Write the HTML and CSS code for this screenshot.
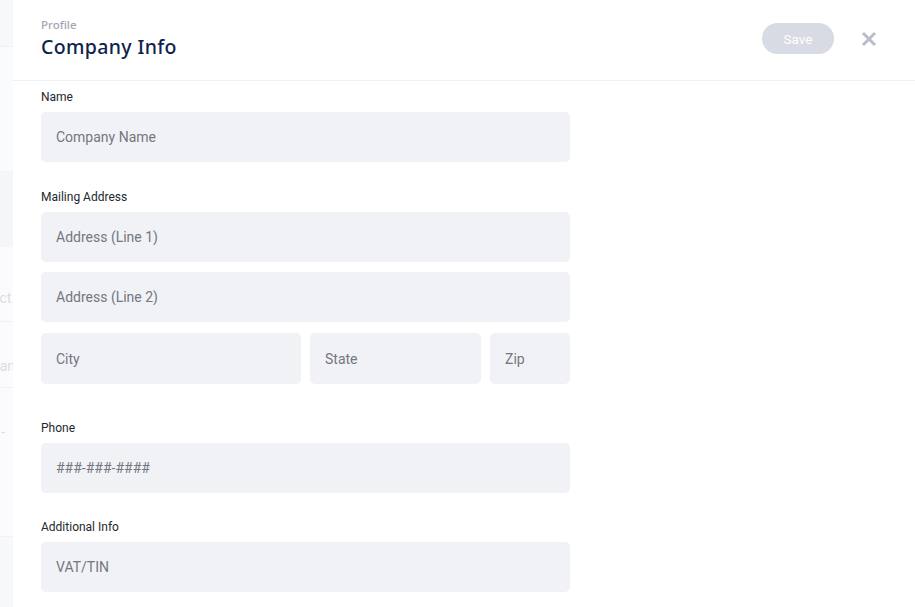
FILE: index.html
```html
<!DOCTYPE html>
<html lang="en">
<head>
<meta charset="utf-8">
<title>Company Info</title>
<link rel="stylesheet" href="styles.css">
</head>
<body>
<div class="page">
  <aside class="backdrop">
    <div class="bg-row bg-top"></div>
    <div class="bg-row bg-a"></div>
    <div class="bg-row bg-b"></div>
    <div class="bg-row bg-c"><span>ct.</span></div>
    <div class="bg-row bg-d"><span>an</span></div>
    <div class="bg-row bg-e"><span>-</span></div>
    <div class="bg-row bg-f"></div>
  </aside>
  <section class="drawer">
    <header class="drawer-head">
      <div class="titles">
        <div class="eyebrow">Profile</div>
        <h1 class="title">Company Info</h1>
      </div>
      <div class="actions">
        <button class="save" type="button">Save</button>
        <button class="close" type="button" aria-label="Close">
          <svg width="16" height="16" viewBox="0 0 16 16"><path d="M2 2 L14 14 M14 2 L2 14" stroke="#b9bdcb" stroke-width="3" stroke-linecap="butt" fill="none"/></svg>
        </button>
      </div>
    </header>
    <form class="form">
      <div class="group">
        <label class="label">Name</label>
        <input class="field" placeholder="Company Name">
      </div>
      <div class="group group-address">
        <label class="label">Mailing Address</label>
        <input class="field" placeholder="Address (Line 1)">
        <input class="field" placeholder="Address (Line 2)">
        <div class="row">
          <input class="field city" placeholder="City">
          <input class="field state" placeholder="State">
          <input class="field zip" placeholder="Zip">
        </div>
      </div>
      <div class="group group-phone">
        <label class="label">Phone</label>
        <input class="field" placeholder="###-###-####">
      </div>
      <div class="group">
        <label class="label">Additional Info</label>
        <input class="field" placeholder="VAT/TIN">
      </div>
    </form>
  </section>
</div>
</body>
</html>
```
FILE: styles.css
```css
* { box-sizing: border-box; }
html, body { margin: 0; padding: 0; height: 100%; }
body {
  font-family: Roboto, "Liberation Sans", sans-serif;
  background: #ffffff;
  overflow: hidden;
}
.page {
  display: flex;
  height: 607px;
}
.backdrop {
  width: 13px;
  flex: none;
  display: flex;
  flex-direction: column;
  overflow: hidden;
  background: #f8f9fb;
}
.bg-row {
  flex: none;
  white-space: nowrap;
  font-size: 14px;
  color: #dadde5;
  display: flex;
  align-items: center;
  justify-content: flex-end;
}
.bg-top { height: 47px; background: #f7f8fa; border-bottom: 1px solid #eef0f3; }
.bg-a { height: 124px; background: #fafbfc; }
.bg-b { height: 76px; background: #f5f6f8; }
.bg-c { height: 75px; background: #fbfbfd; border-bottom: 1px solid #f1f2f5; padding-top: 27px; }
.bg-d { height: 66px; background: #fbfbfd; border-bottom: 1px solid #f1f2f5; padding-top: 22px; }
.bg-e { height: 149px; background: #fbfbfd; border-bottom: 1px solid #f1f2f5; align-items: flex-start; padding-top: 36px; }
.bg-f { flex: 1; background: #f7f8fa; }
.bg-c span, .bg-d span { margin-right: -2px; }
.bg-e span { margin-right: 8px; }

.drawer {
  flex: 1;
  background: #ffffff;
  display: flex;
  flex-direction: column;
  min-height: 0;
}
.drawer-head {
  flex: none;
  height: 81px;
  border-bottom: 1px solid #eff0f4;
  display: flex;
  align-items: flex-start;
  justify-content: space-between;
  padding: 18px 38px 0 28px;
}
.eyebrow {
  font-family: "Noto Sans", sans-serif;
  font-size: 11.5px;
  font-weight: 500;
  color: #a2a6b1;
  line-height: 14px;
}
.title {
  margin: 2px 0 0;
  font-family: "Noto Sans", sans-serif;
  font-size: 19.5px;
  font-weight: 500;
  color: #10214e;
  line-height: 26px;
  letter-spacing: 0.35px;
}
.actions {
  display: flex;
  align-items: center;
  gap: 27px;
  margin-top: 5px;
}
.save {
  width: 72px;
  height: 31px;
  border: none;
  border-radius: 16px;
  background: #d8dbe4;
  color: #ffffff;
  font-family: Roboto, sans-serif;
  font-size: 13.5px;
  padding: 0;
}
.close {
  border: none;
  background: none;
  padding: 0;
  width: 16px;
  height: 16px;
  display: flex;
}
.form {
  flex: none;
  padding: 9px 0 0 28px;
  display: flex;
  flex-direction: column;
  width: 557px;
}
.group {
  flex: none;
  display: flex;
  flex-direction: column;
  gap: 10px;
  margin-bottom: 28px;
}
.group-address { margin-bottom: 37px; }
.group-phone { margin-bottom: 27px; }
.label {
  font-size: 12px;
  line-height: 14px;
  color: #24272d;
  margin-bottom: -2px;
}
.field {
  flex: none;
  height: 50px;
  border: none;
  border-radius: 5px;
  background: #f1f2f6;
  padding: 0 15px;
  font-family: Roboto, sans-serif;
  font-size: 14px;
  color: #222;
  outline: none;
  width: 100%;
}
.field::placeholder { color: #737780; }
.row {
  display: flex;
  gap: 9px;
  margin-top: 1px;
}
.row .field { height: 51px; }
.row .city { width: 260px; }
.row .state { width: 171px; }
.row .zip { width: 80px; }
```
